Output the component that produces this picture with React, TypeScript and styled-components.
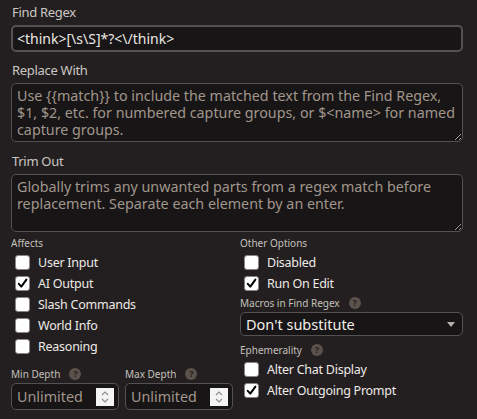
import React from "react";
import styled, { createGlobalStyle } from "styled-components";

const GlobalStyle = createGlobalStyle`
  html, body {
    margin: 0;
    padding: 0;
    background: #231f20;
  }
  body {
    font-family: "Noto Sans", "Open Sans", sans-serif;
    color: #dcd8d4;
  }
`;

const Page = styled.div`
  width: 477px;
  height: 419px;
  box-sizing: border-box;
  padding: 2px 14px 0 11px;
  background: #231f20;
  overflow: hidden;
`;

const Label = styled.div`
  font-size: 13px;
  letter-spacing: -0.3px;
  line-height: 20px;
  color: #cbc7c3;
  padding-left: 1px;
  margin-bottom: 3px;
`;

const Field = styled.div<{ $gap?: number }>`
  margin-bottom: ${(p) => p.$gap ?? 8}px;
`;

const TextInput = styled.input`
  display: block;
  width: 100%;
  height: 27px;
  box-sizing: border-box;
  background: #181516;
  border: 2px solid #555152;
  border-radius: 5px;
  color: #ece8e4;
  font-family: "Noto Sans", sans-serif;
  font-size: 14px;
  padding: 0 4px;
  outline: none;
`;

const TextArea = styled.textarea<{ $h: number }>`
  display: block;
  width: 100%;
  height: ${(p) => p.$h}px;
  box-sizing: border-box;
  background: #181516;
  border: 1px solid #555152;
  border-radius: 5px;
  color: #ece8e4;
  font-family: "Noto Sans", sans-serif;
  font-size: 14.3px;
  line-height: 17px;
  padding: 3px 3px 3px 5px;
  outline: none;
  resize: vertical;
  &::placeholder {
    color: #a1968c;
  }
`;

const Columns = styled.div`
  display: grid;
  grid-template-columns: 223px 1fr;
  column-gap: 6px;
`;

const Column = styled.div`
  display: flex;
  flex-direction: column;
`;

const SmallLabel = styled.div<{ $top?: number }>`
  display: flex;
  align-items: center;
  gap: 9px;
  font-size: 10px;
  line-height: 12px;
  color: #c4c0bc;
  margin-top: ${(p) => p.$top ?? 0}px;
  margin-bottom: 3px;
`;

const Help = styled.span`
  width: 12px;
  height: 12px;
  border-radius: 50%;
  background: #5b524b;
  color: #231f20;
  font-size: 9px;
  font-weight: 700;
  line-height: 12px;
  text-align: center;
`;

const CheckRow = styled.label<{ $indent?: number }>`
  display: flex;
  align-items: center;
  gap: 8px;
  height: 21px;
  padding-left: ${(p) => p.$indent ?? 4}px;
  font-size: 12.5px;
  letter-spacing: -0.25px;
  color: #eeeae6;
`;

const Box = styled.span`
  width: 13px;
  height: 13px;
  background: #ffffff;
  border: 1px solid #8a8686;
  border-radius: 3px;
  display: flex;
  align-items: center;
  justify-content: center;
`;

const Select = styled.div`
  height: 24px;
  box-sizing: border-box;
  border: 1px solid #555152;
  border-radius: 5px;
  background: #181516;
  display: flex;
  align-items: center;
  justify-content: space-between;
  padding: 0 7px 0 5px;
  font-size: 14.5px;
  color: #f2eeea;
`;

const Arrow = styled.span`
  width: 0;
  height: 0;
  border-left: 4.5px solid transparent;
  border-right: 4.5px solid transparent;
  border-top: 5px solid #b5b1ad;
`;

const DepthRow = styled.div`
  display: flex;
  gap: 6px;
  margin-top: 11px;
`;

const Depth = styled.div`
  width: 108px;
  display: flex;
  flex-direction: column;
`;

const NumberBox = styled.div`
  height: 27px;
  box-sizing: border-box;
  border: 1px solid #555152;
  border-radius: 5px;
  background: #181516;
  display: flex;
  align-items: center;
  justify-content: space-between;
  padding: 0 4px 0 5px;
  font-size: 14.3px;
  color: #a1968c;
`;

const Spinner = styled.span`
  width: 18px;
  height: 18px;
  background: #f4f4f4;
  display: flex;
  align-items: center;
  justify-content: center;
`;

function Check({ checked }: { checked?: boolean }) {
  return (
    <Box>
      {checked && (
        <svg width="11" height="11" viewBox="0 0 11 11">
          <path
            d="M1.8 5.8 L4.3 8.6 L9.4 1.6"
            fill="none"
            stroke="#000"
            strokeWidth="2"
            strokeLinecap="round"
            strokeLinejoin="round"
          />
        </svg>
      )}
    </Box>
  );
}

function Option({ label, checked, indent }: { label: string; checked?: boolean; indent?: number }) {
  return (
    <CheckRow $indent={indent}>
      <Check checked={checked} />
      {label}
    </CheckRow>
  );
}

function DepthInput({ label }: { label: string }) {
  return (
    <Depth>
      <SmallLabel>
        {label}
        <Help>?</Help>
      </SmallLabel>
      <NumberBox>
        Unlimited
        <Spinner>
          <svg width="10" height="14" viewBox="0 0 10 14">
            <path d="M2 5 L5 2 L8 5 M2 9 L5 12 L8 9" fill="none" stroke="#8c8c8c" strokeWidth="1.1" />
          </svg>
        </Spinner>
      </NumberBox>
    </Depth>
  );
}

const replaceHint =
  "Use {{match}} to include the matched text from the Find Regex,\n$1, $2, etc. for numbered capture groups, or $<name> for named\ncapture groups.";

const trimHint =
  "Globally trims any unwanted parts from a regex match before\nreplacement. Separate each element by an enter.";

export default function App() {
  return (
    <>
      <GlobalStyle />
      <Page>
        <Field>
          <Label>Find Regex</Label>
          <TextInput defaultValue="<think>[\s\S]*?<\/think>" />
        </Field>
        <Field $gap={9}>
          <Label>Replace With</Label>
          <TextArea $h={59} placeholder={replaceHint} />
        </Field>
        <Field $gap={5}>
          <Label>Trim Out</Label>
          <TextArea $h={58} placeholder={trimHint} />
        </Field>
        <Columns>
          <Column>
            <SmallLabel>Affects</SmallLabel>
            <Option label="User Input" />
            <Option label="AI Output" checked />
            <Option label="Slash Commands" />
            <Option label="World Info" />
            <Option label="Reasoning" />
            <DepthRow>
              <DepthInput label="Min Depth" />
              <DepthInput label="Max Depth" />
            </DepthRow>
          </Column>
          <Column>
            <SmallLabel>Other Options</SmallLabel>
            <Option label="Disabled" />
            <Option label="Run On Edit" checked />
            <SmallLabel $top={3}>
              Macros in Find Regex
              <Help>?</Help>
            </SmallLabel>
            <Select>
              Don't substitute
              <Arrow />
            </Select>
            <SmallLabel $top={8}>
              Ephemerality
              <Help>?</Help>
            </SmallLabel>
            <Option label="Alter Chat Display" />
            <Option label="Alter Outgoing Prompt" checked />
          </Column>
        </Columns>
      </Page>
    </>
  );
}
